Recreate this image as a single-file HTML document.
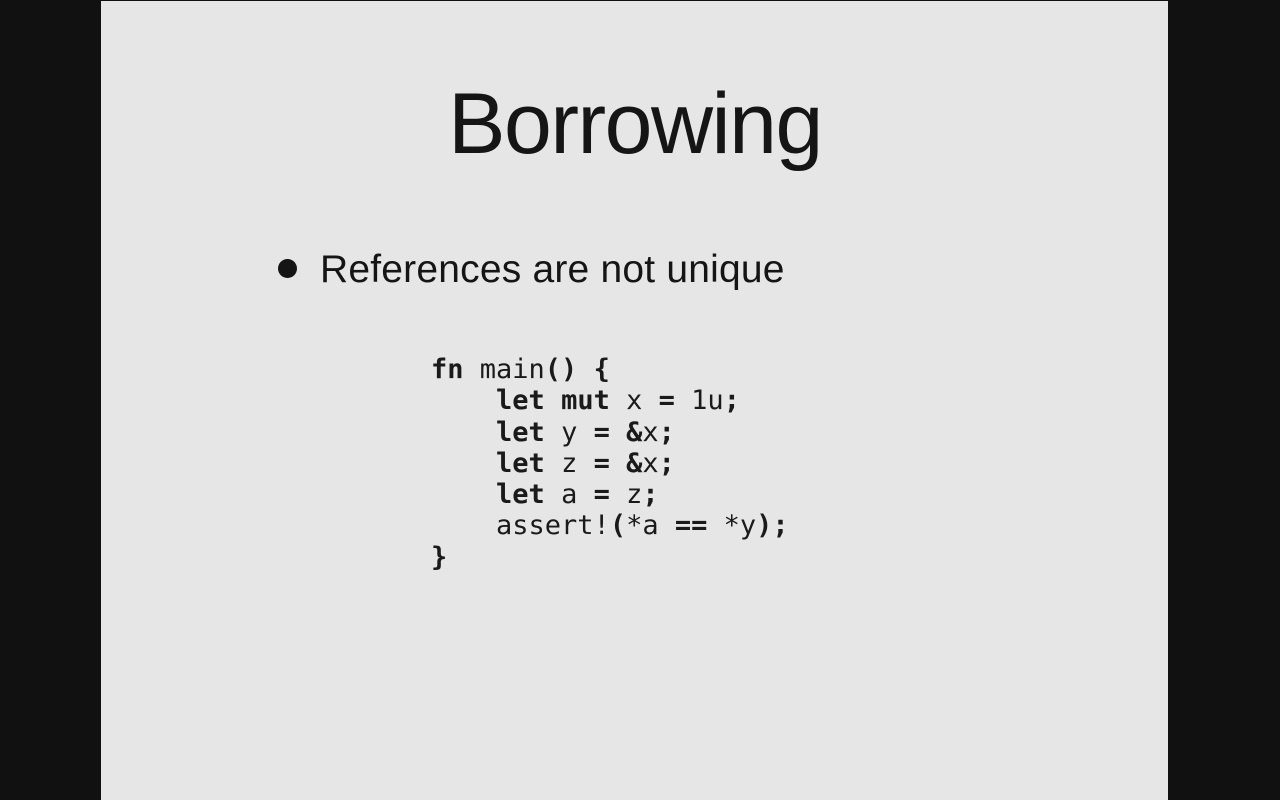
<!DOCTYPE html>
<html><head><style>
body{margin:0;width:1280px;height:800px;background:#111;position:relative;overflow:hidden}
.slide{position:absolute;left:101px;top:1px;width:1067px;height:799px;background:#e6e6e6}
.t{position:absolute;left:0;width:1270px;text-align:center;top:74px;font:86px/100px "Liberation Sans",sans-serif;letter-spacing:-1.5px;color:#151515}
.b{position:absolute;left:320px;top:246px;font:39px/48px "Liberation Sans",sans-serif;color:#151515;letter-spacing:0.2px}
.dot{position:absolute;left:278px;top:259px;width:19px;height:19px;border-radius:50%;background:#151515}
pre{position:absolute;left:431px;top:354px;margin:0;font:27px/31.3px "DejaVu Sans Mono",monospace;color:#1a1a1a}
b{font-weight:bold}
</style></head><body>
<div class="slide"></div>
<div class="t">Borrowing</div>
<div class="dot"></div>
<div class="b">References are not unique</div>
<pre><b>fn</b> main<b>()</b> <b>{</b>
    <b>let</b> <b>mut</b> x <b>=</b> 1u<b>;</b>
    <b>let</b> y <b>=</b> <b>&amp;</b>x<b>;</b>
    <b>let</b> z <b>=</b> <b>&amp;</b>x<b>;</b>
    <b>let</b> a <b>=</b> z<b>;</b>
    assert!<b>(</b>*a <b>==</b> *y<b>);</b>
<b>}</b></pre>
</body></html>
